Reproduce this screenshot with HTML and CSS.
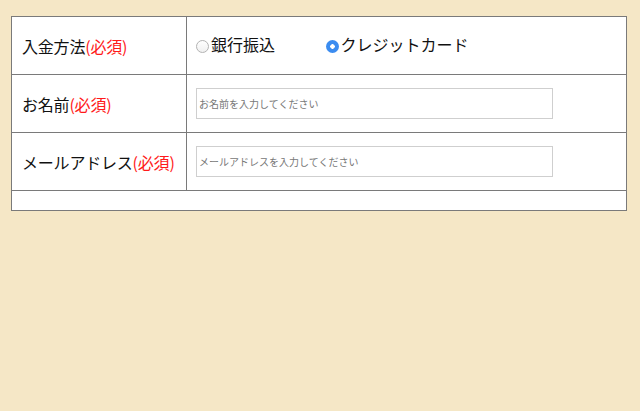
FILE: index.html
```html
<!DOCTYPE html>
<html lang="ja">
<head>
<meta charset="utf-8">
<link rel="stylesheet" href="styles.css">
</head>
<body>
<div class="page">
  <table class="form-table">
    <tr class="row">
      <th class="label">入金方法<span class="req">(必須)</span></th>
      <td class="field">
        <label class="radio-item gap"><input type="radio" name="pay" class="radio">銀行振込</label>
        <label class="radio-item"><input type="radio" name="pay" class="radio" checked>クレジットカード</label>
      </td>
    </tr>
    <tr class="row">
      <th class="label">お名前<span class="req">(必須)</span></th>
      <td class="field"><input type="text" class="text-input" placeholder="お名前を入力してください"></td>
    </tr>
    <tr class="row">
      <th class="label">メールアドレス<span class="req">(必須)</span></th>
      <td class="field"><input type="text" class="text-input" placeholder="メールアドレスを入力してください"></td>
    </tr>
    <tr class="row-empty">
      <td class="empty" colspan="2"></td>
    </tr>
  </table>
</div>
</body>
</html>
```

FILE: styles.css
```css
html, body {
  margin: 0;
  padding: 0;
  background: #f5e7c6;
  font-family: "Noto Sans CJK JP", "Noto Sans", sans-serif;
  color: #111;
}
.page {
  padding: 16px 13px 0 11px;
}
.form-table {
  width: 100%;
  border-collapse: collapse;
  background: #fff;
  border: 1px solid #6e6e6e;
}
.form-table th,
.form-table td {
  border: 1px solid #7a7a7a;
  padding: 0 10px;
  vertical-align: middle;
}
.form-table .field {
  padding-left: 9px;
}
.row > th,
.row > td {
  height: 57px;
}
.label {
  width: 154px;
  text-align: left;
  font-weight: normal;
  font-size: 16px;
  letter-spacing: -0.2px;
  white-space: nowrap;
}
.req {
  color: #ff1a1a;
}
.field {
  font-size: 16px;
}
.radio-item {
  display: inline-flex;
  align-items: center;
  line-height: 20px;
}
.radio-item.gap {
  margin-right: 47px;
}
.radio {
  appearance: none;
  -webkit-appearance: none;
  width: 13px;
  height: 13px;
  margin: 4px 2px 0 0;
  border-radius: 50%;
  border: 1px solid #b3b3b3;
  background: linear-gradient(#fff, #f0f0f0);
  box-sizing: border-box;
}
.radio:checked {
  border: none;
  background: radial-gradient(circle, #fff 0 2px, #3b8cf0 2.5px);
}
.text-input {
  display: block;
  width: 357px;
  height: 31px;
  box-sizing: border-box;
  border: 1px solid #cfcfcf;
  padding: 0 2px;
  font-family: inherit;
  font-size: 10px;
  outline: none;
}
.text-input::placeholder {
  color: #777;
}
.empty {
  height: 19px;
}
```
